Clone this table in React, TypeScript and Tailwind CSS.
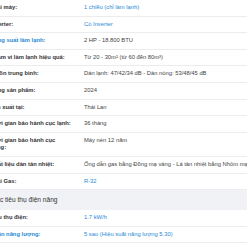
type Spec = {
  label: string;
  value: string;
  labelLink?: boolean;
  valueLink?: boolean;
};

const specs: Spec[] = [
  { label: "Loại máy:", value: "1 chiều (chỉ làm lạnh)", valueLink: true },
  { label: "Inverter:", value: "Có Inverter", valueLink: true },
  { label: "Công suất làm lạnh:", value: "2 HP - 18.800 BTU", labelLink: true },
  { label: "Phạm vi làm lạnh hiệu quả:", value: "Từ 20 - 30m² (từ 60 đến 80m³)" },
  { label: "Độ ồn trung bình:", value: "Dàn lạnh: 47/42/34 dB - Dàn nóng: 53/48/45 dB" },
  { label: "Dòng sản phẩm:", value: "2024" },
  { label: "Sản xuất tại:", value: "Thái Lan" },
  { label: "Thời gian bảo hành cục lạnh:", value: "36 tháng" },
  { label: "Thời gian bảo hành cục nóng:", value: "Máy nén 12 năm" },
  {
    label: "Chất liệu dàn tản nhiệt:",
    value: "Ống dẫn gas bằng Đồng mạ vàng - Lá tản nhiệt bằng Nhôm mạ vàng",
  },
  { label: "Loại Gas:", value: "R-32", valueLink: true },
];

const power: Spec[] = [
  { label: "Tiêu thụ điện:", value: "1.7 kW/h", valueLink: true },
  {
    label: "Nhãn năng lượng:",
    value: "5 sao (Hiệu suất năng lượng 5.30)",
    labelLink: true,
    valueLink: true,
  },
];

const Row = ({ spec }: { spec: Spec }) => (
  <div className="flex border-b border-[#ececec] py-[4px]">
    <div
      className={`w-[81px] shrink-0 mr-[13px] font-bold ${
        spec.labelLink ? "text-[#288ad6]" : "text-[#333]"
      }`}
    >
      {spec.label}
    </div>
    <div
      className={`whitespace-nowrap ${
        spec.valueLink ? "text-[#288ad6]" : "text-[#444]"
      }`}
    >
      {spec.value}
    </div>
  </div>
);

export default function App() {
  return (
    <div className="w-[247px] h-[247px] overflow-hidden bg-white">
      <div className="-ml-[10px] w-[320px] font-['Liberation_Sans',Arial,sans-serif] text-[5.8px] leading-[7.6px]">
        {specs.map((s) => (
          <Row key={s.label} spec={s} />
        ))}

        {/* section header */}
        <div className="bg-[#f1f2f6] h-[20px] flex items-center text-[6.6px] text-[#333]">
          Mức tiêu thụ điện năng
        </div>

        {power.map((s) => (
          <Row key={s.label} spec={s} />
        ))}
      </div>
    </div>
  );
}
